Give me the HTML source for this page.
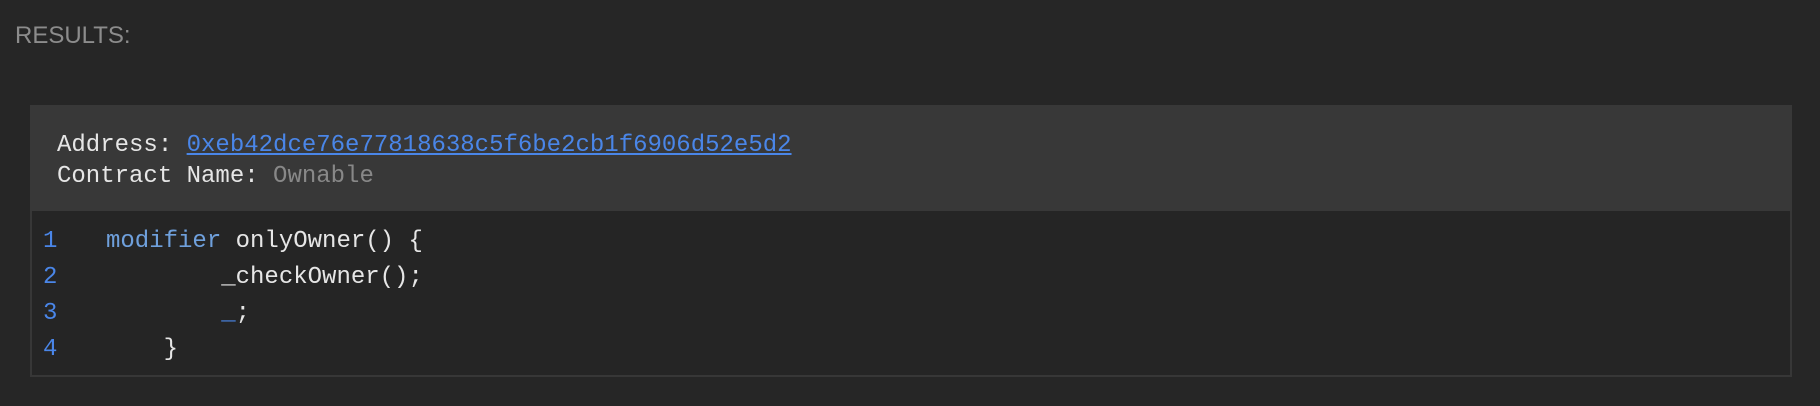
<!DOCTYPE html>
<html><head><style>
body{margin:0;width:1820px;height:406px;background:#262626;overflow:hidden;position:relative;font-family:"Liberation Mono",monospace}
.r{position:absolute;left:15px;top:21px;font:24px "Liberation Sans",sans-serif;color:#8c8c8c;line-height:30px}
.box{position:absolute;left:30px;top:105px;width:1762px;height:272px;background:#252525;box-sizing:border-box;border:2px solid #373737;border-top:none}
.hd{position:absolute;left:30px;top:105px;width:1762px;height:106px;background:#383838}
.t{position:absolute;font-size:24px;line-height:30px;white-space:pre;color:#e6e6e6}
a{color:#4a86e8;text-decoration:underline}
.g{color:#888}
.n{color:#4a86e8}
.k{color:#6fa0dc}
</style></head><body>
<div class="r">RESULTS:</div>
<div class="box"></div>
<div class="hd"></div>
<div class="t" style="left:57px;top:131px">Address: <a>0xeb42dce76e77818638c5f6be2cb1f6906d52e5d2</a></div>
<div class="t" style="left:57px;top:162px">Contract Name: <span class="g">Ownable</span></div>
<div class="t n" style="left:43px;top:227px">1</div>
<div class="t n" style="left:43px;top:263px">2</div>
<div class="t n" style="left:43px;top:299px">3</div>
<div class="t n" style="left:43px;top:335px">4</div>
<div class="t" style="left:106px;top:227px"><span class="k">modifier</span> onlyOwner() {</div>
<div class="t" style="left:106px;top:263px">        _checkOwner();</div>
<div class="t" style="left:106px;top:299px">        <span class="n">_</span>;</div>
<div class="t" style="left:106px;top:335px">    }</div>
</body></html>
